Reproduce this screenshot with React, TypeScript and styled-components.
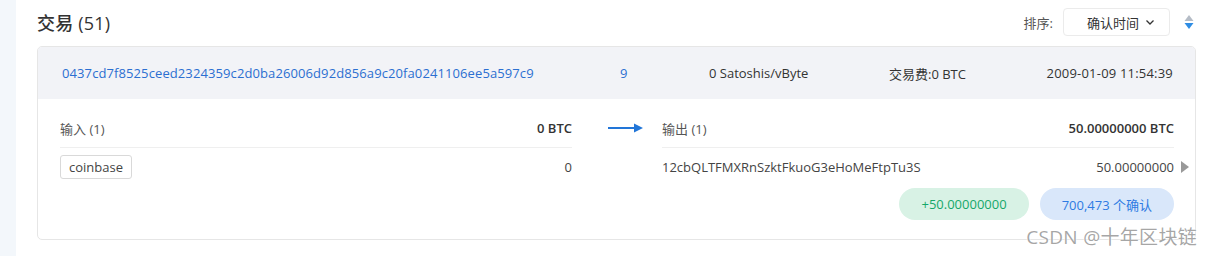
import styled, { createGlobalStyle } from "styled-components";

const GlobalStyle = createGlobalStyle`
  body {
    margin: 0;
    background: #ffffff;
    font-family: "Open Sans", "Noto Sans CJK SC", sans-serif;
    color: #333333;
  }
`;

const Page = styled.div({
  position: "relative",
  display: "flex",
  width: 1211,
  height: 256,
  overflow: "hidden",
});

const SideStrip = styled.div({
  width: 16,
  flexShrink: 0,
  background: "#f3f7fb",
});

const Main = styled.div({
  flex: 1,
  padding: "0 15px 0 21px",
});

const TitleRow = styled.div({
  display: "flex",
  alignItems: "center",
  justifyContent: "space-between",
  height: 44,
  paddingBottom: 2,
});

const Title = styled.h2({
  margin: 0,
  fontSize: 18,
  fontWeight: 500,
  color: "#333",
  letterSpacing: 0.2,
});

const SortBox = styled.div({
  display: "flex",
  alignItems: "center",
  gap: 10,
});

const SortLabel = styled.span({
  fontSize: 13,
  color: "#555",
});

const Select = styled.div({
  display: "flex",
  alignItems: "center",
  justifyContent: "flex-end",
  gap: 6,
  width: 107,
  height: 28,
  boxSizing: "border-box",
  padding: "0 14px",
  border: "1px solid #ebebeb",
  borderRadius: 4,
  fontSize: 13,
  color: "#333",
});

const SortIcon = styled.svg({
  marginLeft: 4,
  marginRight: 2,
});

const Card = styled.div({
  border: "1px solid #e6e6e6",
  borderRadius: 5,
  overflow: "hidden",
});

const CardHead = styled.div({
  display: "grid",
  gridTemplateColumns: "558px 89px 180px 150px 1fr",
  alignItems: "center",
  height: 52,
  padding: "0 22px 0 24px",
  background: "#f2f3f7",
  fontSize: 13,
  color: "#333",
  whiteSpace: "nowrap",
});

const HashLink = styled.a({
  color: "#2c6fd1",
  textDecoration: "none",
  letterSpacing: 0.1,
});

const Blue = styled.span({
  color: "#2c6fd1",
});

const DateCell = styled.span({
  textAlign: "right",
  letterSpacing: 0.2,
});

const CardBody = styled.div({
  display: "grid",
  gridTemplateColumns: "512px 90px 512px",
  padding: "14px 21px 19px 22px",
});

const Column = styled.div({
  display: "flex",
  flexDirection: "column",
});

const ColHead = styled.div({
  display: "flex",
  justifyContent: "space-between",
  alignItems: "center",
  height: 30,
  paddingBottom: 4,
  borderBottom: "1px solid #efefef",
  fontSize: 13,
  color: "#555",
});

const Amount = styled.span({
  fontWeight: 600,
  color: "#333",
});

const ItemRow = styled.div({
  display: "flex",
  justifyContent: "space-between",
  alignItems: "center",
  height: 24,
  marginTop: 7,
  fontSize: 13,
  color: "#444",
});

const Tag = styled.span({
  display: "inline-flex",
  alignItems: "center",
  height: 22,
  padding: "0 8px",
  border: "1px solid #d9d9d9",
  borderRadius: 3,
  color: "#444",
});

const ArrowCell = styled.div({
  display: "flex",
  justifyContent: "flex-start",
  paddingLeft: 34,
  paddingTop: 10,
});

const Value = styled.span({
  position: "relative",
});

const Caret = styled.span({
  position: "absolute",
  right: -15,
  top: "50%",
  transform: "translateY(-50%)",
  width: 0,
  height: 0,
  borderTop: "6px solid transparent",
  borderBottom: "6px solid transparent",
  borderLeft: "8px solid #999",
});

const PillRow = styled.div({
  display: "flex",
  justifyContent: "flex-end",
  gap: 11,
  marginTop: 9,
});

const Pill = styled.span<{ $tone: "green" | "blue" }>(({ $tone }) => ({
  display: "inline-flex",
  alignItems: "center",
  height: 32,
  padding: "0 22px",
  borderRadius: 16,
  fontSize: 13,
  background: $tone === "green" ? "#d8f2e5" : "#d9e7fa",
  color: $tone === "green" ? "#16a86a" : "#2e7be3",
}));

const Watermark = styled.div({
  position: "absolute",
  right: 14,
  bottom: 6,
  fontSize: 19,
  color: "rgba(150,150,150,0.85)",
  textShadow: "0 0 2px #fff, 0 0 2px #fff",
  letterSpacing: 0.3,
});

export default function App() {
  return (
    <Page>
      <GlobalStyle />
      <SideStrip />
      <Main>
        <TitleRow>
          <Title>交易 (51)</Title>
          <SortBox>
            <SortLabel>排序:</SortLabel>
            <Select>
              确认时间
              <svg width="10" height="10" viewBox="0 0 10 10">
                <path d="M1.5 3.5 L5 7 L8.5 3.5" fill="none" stroke="#333" strokeWidth="1.3" />
              </svg>
            </Select>
            <SortIcon width="10" height="16" viewBox="0 0 10 16">
              <path d="M5 1 L9.5 7 L0.5 7 Z" fill="#b5bcc6" />
              <path d="M0.5 9 L9.5 9 L5 15 Z" fill="#2f8de4" />
            </SortIcon>
          </SortBox>
        </TitleRow>
        <Card>
          <CardHead>
            <HashLink href="#">0437cd7f8525ceed2324359c2d0ba26006d92d856a9c20fa0241106ee5a597c9</HashLink>
            <Blue>9</Blue>
            <span>0 Satoshis/vByte</span>
            <span>交易费:0 BTC</span>
            <DateCell>2009-01-09 11:54:39</DateCell>
          </CardHead>
          <CardBody>
            <Column>
              <ColHead>
                <span>输入 (1)</span>
                <Amount>0 BTC</Amount>
              </ColHead>
              <ItemRow>
                <Tag>coinbase</Tag>
                <span>0</span>
              </ItemRow>
            </Column>
            <ArrowCell>
              <svg width="38" height="10" viewBox="0 0 38 10">
                <path d="M2 5 H30" stroke="#2276d8" strokeWidth="2" />
                <path d="M28 0.5 L37 5 L28 9.5 Z" fill="#2276d8" />
              </svg>
            </ArrowCell>
            <Column>
              <ColHead>
                <span>输出 (1)</span>
                <Amount>50.00000000 BTC</Amount>
              </ColHead>
              <ItemRow>
                <span>12cbQLTFMXRnSzktFkuoG3eHoMeFtpTu3S</span>
                <Value>
                  50.00000000
                  <Caret />
                </Value>
              </ItemRow>
              <PillRow>
                <Pill $tone="green">+50.00000000</Pill>
                <Pill $tone="blue">700,473 个确认</Pill>
              </PillRow>
            </Column>
          </CardBody>
        </Card>
      </Main>
      <Watermark>CSDN @十年区块链</Watermark>
    </Page>
  );
}
